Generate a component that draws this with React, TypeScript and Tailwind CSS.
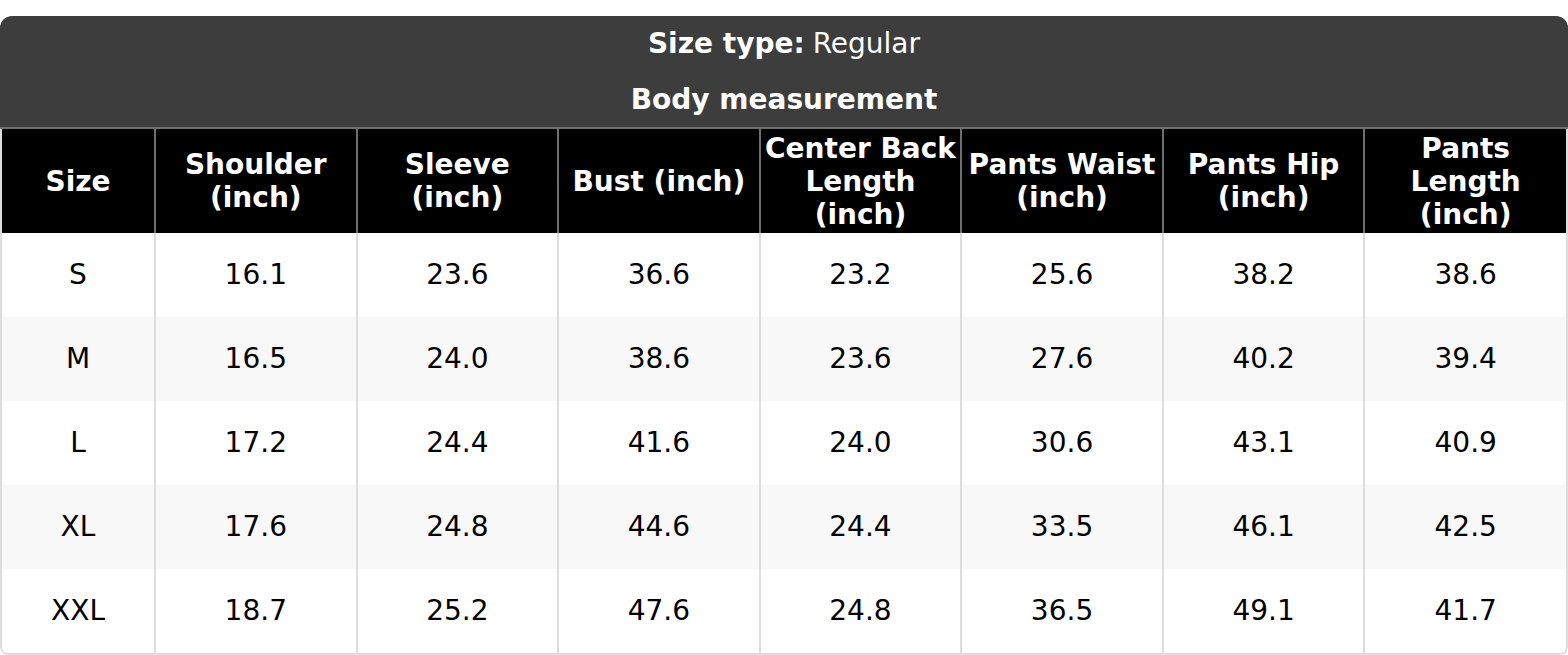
import React from 'react';

const columns = [
  'Size',
  'Shoulder (inch)',
  'Sleeve (inch)',
  'Bust (inch)',
  'Center Back Length (inch)',
  'Pants Waist (inch)',
  'Pants Hip (inch)',
  'Pants Length (inch)',
];

const rows = [
  ['S', '16.1', '23.6', '36.6', '23.2', '25.6', '38.2', '38.6'],
  ['M', '16.5', '24.0', '38.6', '23.6', '27.6', '40.2', '39.4'],
  ['L', '17.2', '24.4', '41.6', '24.0', '30.6', '43.1', '40.9'],
  ['XL', '17.6', '24.8', '44.6', '24.4', '33.5', '46.1', '42.5'],
  ['XXL', '18.7', '25.2', '47.6', '24.8', '36.5', '49.1', '41.7'],
];

export default function App() {
  return (
    <div className="min-h-[655px] bg-white pt-4 font-['DejaVu_Sans',sans-serif]">
      <div className="overflow-hidden rounded-t-[12px] rounded-b-[8px]">
        {/* Title block */}
        <div className="bg-[#3d3d3d] text-[28px] text-white">
          <div className="flex h-[56px] items-center justify-center">
            <span className="font-bold">Size type:</span>
            <span className="ml-2">Regular</span>
          </div>
          <div className="flex h-[57px] items-center justify-center border-b-2 border-[#6e6e6e] font-bold">
            Body measurement
          </div>
        </div>

        <div className="overflow-hidden rounded-b-[8px] border-r-2 border-b-2 border-l-2 border-[#dddddd]">
          <table className="w-full table-fixed border-collapse text-[28px]">
            <colgroup>
              <col className="w-[153px]" />
              {columns.slice(1).map((c) => (
                <col key={c} />
              ))}
            </colgroup>
            <thead>
              <tr className="h-[104px] bg-black text-white">
                {columns.map((c, i) => (
                  <th
                    key={c}
                    className={`px-1 text-center align-middle font-bold leading-[33px] ${
                      i > 0 ? 'border-l-2 border-[#6e6e6e]' : ''
                    }`}
                  >
                    {c}
                  </th>
                ))}
              </tr>
            </thead>
            <tbody>
              {rows.map((r, ri) => (
                <tr
                  key={r[0]}
                  className={`h-[84px] ${ri % 2 === 1 ? 'bg-[#f8f8f8]' : 'bg-white'}`}
                >
                  {r.map((v, i) => (
                    <td
                      key={i}
                      className={`text-center align-middle text-black ${
                        i > 0 ? 'border-l-2 border-[#dddddd]' : ''
                      }`}
                    >
                      {v}
                    </td>
                  ))}
                </tr>
              ))}
            </tbody>
          </table>
        </div>
      </div>
    </div>
  );
}
